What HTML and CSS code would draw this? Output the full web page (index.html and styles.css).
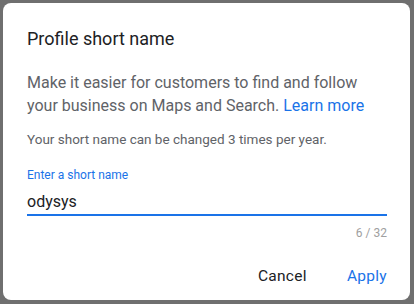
FILE: index.html
```html
<!DOCTYPE html>
<html>
<head>
<meta charset="utf-8">
<link rel="stylesheet" href="styles.css">
</head>
<body>
<div class="backdrop">
  <div class="dialog">
    <h1 class="title">Profile short name</h1>
    <p class="intro"><span>Make it easier for customers to find and follow</span> <span>your business on Maps and Search.</span> <a class="link" href="#">Learn more</a></p>
    <p class="note">Your short name can be changed 3 times per year.</p>
    <div class="field">
      <label class="label">Enter a short name</label>
      <div class="input">odysys</div>
      <div class="counter">6 / 32</div>
    </div>
    <div class="actions">
      <button class="btn btn-cancel">Cancel</button>
      <button class="btn btn-apply">Apply</button>
    </div>
  </div>
</div>
</body>
</html>
```
FILE: styles.css
```css
html, body {
  margin: 0;
  padding: 0;
}
body {
  width: 414px;
  height: 304px;
  overflow: hidden;
  font-family: Roboto, "Liberation Sans", Arial, sans-serif;
  background: #6f6f6f;
}
.backdrop {
  width: 414px;
  height: 304px;
  padding: 3px 4px 4px 3px;
  box-sizing: border-box;
}
.dialog {
  width: 407px;
  height: 297px;
  background: #fff;
  border-radius: 8px;
  box-sizing: border-box;
  padding: 24px 23px 0 24px;
  display: flex;
  flex-direction: column;
}
.title {
  margin: 0;
  font-size: 18px;
  line-height: 24px;
  font-weight: 400;
  color: #202124;
}
.intro {
  margin: 20px 0 0;
  font-size: 16px;
  line-height: 23px;
  color: #5f6368;
}
.link {
  color: #1a73e8;
  text-decoration: none;
}
.note {
  margin: 12px 0 0;
  font-size: 13.5px;
  line-height: 20px;
  color: #5f6368;
}
.field {
  margin-top: 18px;
  display: flex;
  flex-direction: column;
}
.label {
  font-size: 12px;
  line-height: 16px;
  color: #1a73e8;
}
.input {
  font-size: 16px;
  line-height: 24px;
  color: #202124;
  padding: 7px 0 0;
  border-bottom: 2px solid #1a73e8;
}
.counter {
  align-self: flex-end;
  margin-top: 9px;
  font-size: 12px;
  line-height: 16px;
  color: #a0a0a0;
}
.actions {
  margin-top: 25px;
  display: flex;
  justify-content: flex-end;
  gap: 40px;
}
.btn {
  border: 0;
  background: none;
  padding: 0;
  font-family: Roboto, "Liberation Sans", Arial, sans-serif;
  font-size: 15.5px;
  line-height: 20px;
  font-weight: 400;
  letter-spacing: 0.3px;
}
.btn-cancel {
  color: #202124;
}
.btn-apply {
  color: #1a73e8;
}
```
